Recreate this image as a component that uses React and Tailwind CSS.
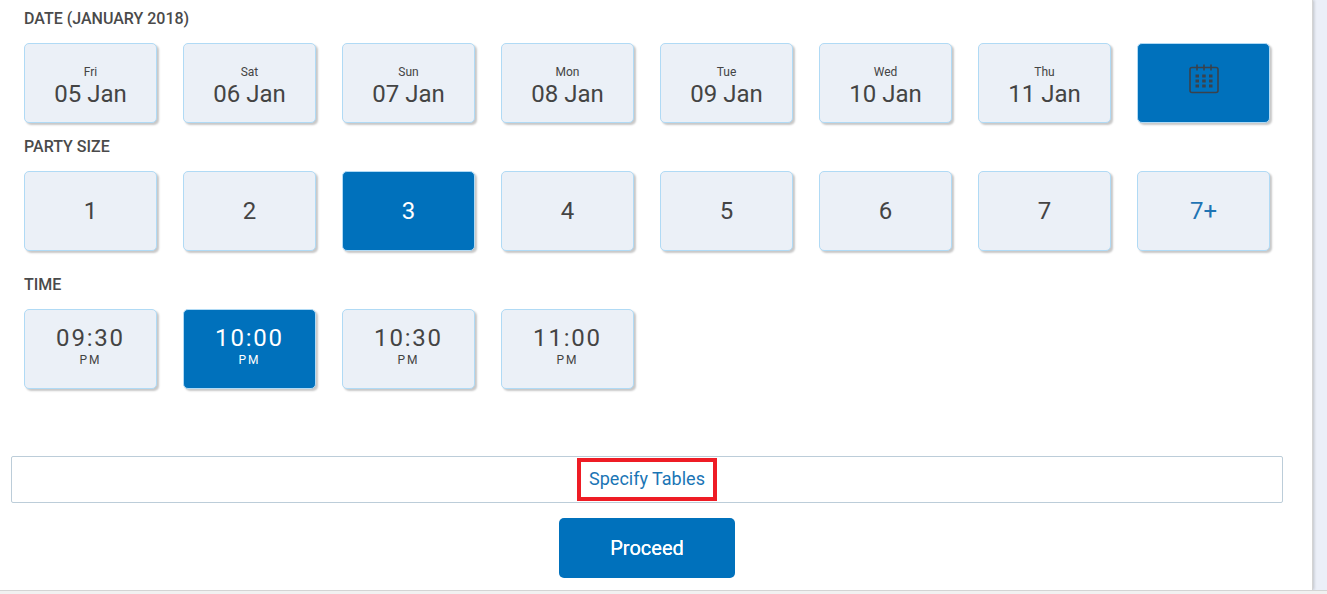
import React from 'react';

const dates = [
    ['Fri', '05 Jan'],
    ['Sat', '06 Jan'],
    ['Sun', '07 Jan'],
    ['Mon', '08 Jan'],
    ['Tue', '09 Jan'],
    ['Wed', '10 Jan'],
    ['Thu', '11 Jan'],
];
const sizes = ['1', '2', '3', '4', '5', '6', '7', '7+'];
const times = ['09:30', '10:00', '10:30', '11:00'];

const tileBase = 'w-[133px] h-[80px] rounded-[5px] border border-[#b0daf5] flex flex-col items-center justify-center shadow-[2px_2px_2px_rgba(0,0,0,0.22)]';
const tileIdle = 'bg-[#ebf0f7] text-[#444444]';
const tileActive = 'bg-[#0071bc] text-white';
const labelClass = 'text-base font-medium leading-[18px] text-[#4a4a4a]';

function Tile({ active, children }) {
    return <div className={`${tileBase} ${active ? tileActive : tileIdle}`}>{children}</div>;
}

function CalendarIcon() {
    return (
        <svg width="30" height="30" viewBox="0 0 30 30" fill="none" stroke="#3a424b" strokeWidth="1.6" className="block">
            <rect x="1" y="3.5" width="28" height="25" rx="2" />
            <path d="M8 0.5v6M15 0.5v6M22 0.5v6" />
            <g fill="#3a424b" stroke="none">
                <rect x="6.5" y="10.5" width="3.5" height="3" />
                <rect x="13.2" y="10.5" width="3.5" height="3" />
                <rect x="20" y="10.5" width="3.5" height="3" />
                <rect x="6.5" y="15.5" width="3.5" height="3" />
                <rect x="13.2" y="15.5" width="3.5" height="3" />
                <rect x="20" y="15.5" width="3.5" height="3" />
                <rect x="6.5" y="20.5" width="3.5" height="3" />
                <rect x="13.2" y="20.5" width="3.5" height="3" />
                <rect x="20" y="20.5" width="3.5" height="3" />
            </g>
        </svg>
    );
}

export default function App() {
    return (
        <div className="w-[1327px] h-[594px] overflow-hidden bg-[#ebeff8] font-['Roboto',sans-serif] text-[#444444]">
            <div className="w-[1313px] h-[590px] bg-white border-r border-[#d4d4d4] shadow-[1px_0_3px_rgba(0,0,0,0.2)] flex flex-col">
                <div className="pl-6 pt-[10px]">
                    <div className={labelClass}>DATE (JANUARY 2018)</div>
                    <div className="flex gap-[26px] mt-[15px]">
                        {dates.map(([day, date]) => (
                            <Tile key={date}>
                                <span className="text-xs leading-[14px] mt-[7px]">{day}</span>
                                <span className="text-[24px] leading-[28px] mt-[1px]">{date}</span>
                            </Tile>
                        ))}
                        <Tile active>
                            <span className="-mt-[9px]"><CalendarIcon /></span>
                        </Tile>
                    </div>

                    <div className={`${labelClass} mt-[15px]`}>PARTY SIZE</div>
                    <div className="flex gap-[26px] mt-[15px]">
                        {sizes.map((size) => (
                            <Tile key={size} active={size === '3'}>
                                <span className={`text-[24px] leading-[28px] ${size === '7+' ? 'text-[#1f74b4]' : ''}`}>{size}</span>
                            </Tile>
                        ))}
                    </div>

                    <div className={`${labelClass} mt-[25px]`}>TIME</div>
                    <div className="flex gap-[26px] mt-[15px]">
                        {times.map((time) => (
                            <Tile key={time} active={time === '10:00'}>
                                <span className="text-[24px] leading-[28px] tracking-[1.8px]">{time}</span>
                                <span className="text-xs leading-[14px] tracking-[2px] mb-[8px] mt-[1px]">PM</span>
                            </Tile>
                        ))}
                    </div>
                </div>

                <div className="ml-[11px] mt-[67px] w-[1272px] h-[47px] border border-[#bccdd9] rounded-[2px] flex items-center justify-center">
                    <div className="w-[140px] h-[43px] border-[4px] border-[#ee1c25] flex items-center justify-center text-[#1a75b5] text-lg pb-[1px]">
                        Specify Tables
                    </div>
                </div>

                <div className="ml-[11px] w-[1272px] flex justify-center mt-[15px]">
                    <div className="w-[176px] h-[60px] rounded-[5px] bg-[#0071bc] text-white text-[20px] [text-shadow:0_0_0.4px_white] flex items-center justify-center">
                        Proceed
                    </div>
                </div>
            </div>
            <div className="h-[4px] bg-[#f1f1f1] border-t border-[#d4d4d4]"></div>
        </div>
    );
}
